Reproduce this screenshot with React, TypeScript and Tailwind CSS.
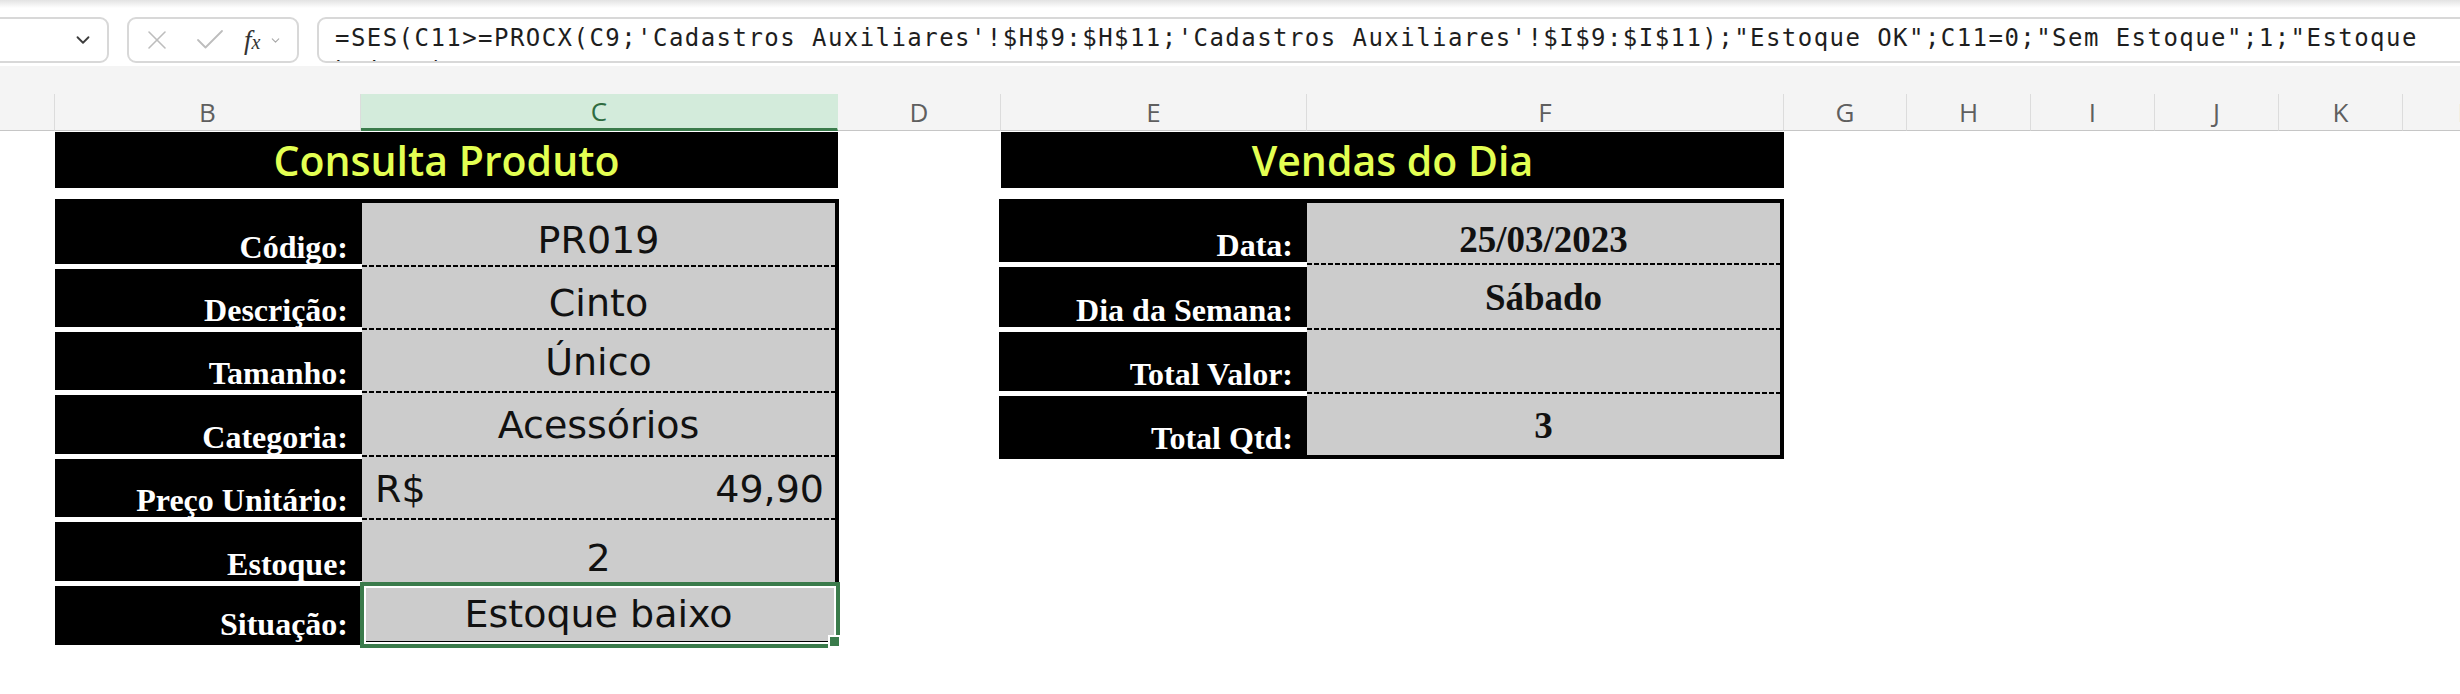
import { X, Check, ChevronDown } from 'lucide-react'

const columns = [
  { name: 'A', w: 'w-[55px]', first: true },
  { name: 'B', w: 'w-[306px]' },
  { name: 'C', w: 'w-[477px]', selected: true },
  { name: 'D', w: 'w-[163px]' },
  { name: 'E', w: 'w-[306px]' },
  { name: 'F', w: 'w-[477px]' },
  { name: 'G', w: 'w-[123px]' },
  { name: 'H', w: 'w-[124px]' },
  { name: 'I', w: 'w-[124px]' },
  { name: 'J', w: 'w-[124px]' },
  { name: 'K', w: 'w-[124px]' },
  { name: 'L', w: 'w-[124px]' },
]

const produto = [
  { label: 'Código:', value: 'PR019', h: 'h-[66px]', pad: 'pt-[12px]' },
  { label: 'Descrição:', value: 'Cinto', h: 'h-[63px]', pad: 'pt-[9px]' },
  { label: 'Tamanho:', value: 'Único', h: 'h-[63px]', pad: 'pt-0' },
  { label: 'Categoria:', value: 'Acessórios', h: 'h-[64px]', pad: 'pt-0' },
  { label: 'Preço Unitário:', value: 'money', h: 'h-[63px]', pad: 'pt-0' },
  { label: 'Estoque:', value: '2', h: 'h-[64px]', pad: 'pt-[12px]' },
  { label: 'Situação:', value: 'Estoque baixo', h: 'h-[55px]', pad: 'pt-0' },
]

const vendas = [
  { label: 'Data:', value: '25/03/2023', h: 'h-[64px]', pad: 'pt-[12px]' },
  { label: 'Dia da Semana:', value: 'Sábado', h: 'h-[65px]', pad: 'pt-0' },
  { label: 'Total Valor:', value: '', h: 'h-[64px]', pad: 'pt-0' },
  { label: 'Total Qtd:', value: '3', h: 'h-[59px]', pad: 'pt-0' },
]

const formula =
  '=SES(C11>=PROCX(C9;\'Cadastros Auxiliares\'!$H$9:$H$11;\'Cadastros Auxiliares\'!$I$9:$I$11);"Estoque OK";C11=0;"Sem Estoque";1;"Estoque'

function Dashed() {
  return (
    <>
      <div className="h-[2px] bg-[repeating-linear-gradient(90deg,#000_0px,#000_5px,transparent_5px,transparent_7px)]" />
      <div className="h-[2px]" />
    </>
  )
}

function Label({ text, last, width }: { text: string; last: boolean; width: string }) {
  return (
    <div
      className={`${width} bg-black flex items-end justify-end pr-[14px] pb-[1px] ${
        last ? '' : 'border-b-[5px] border-white'
      }`}
    >
      <span className="font-['Liberation_Serif',serif] font-bold text-[32px] leading-none text-white whitespace-nowrap">
        {text}
      </span>
    </div>
  )
}

function ConsultaProduto() {
  return (
    <div className="w-[783px]">
      <div className="h-[56px] bg-black flex items-center justify-center">
        <span className="font-['Open_Sans',sans-serif] font-semibold text-[41px] leading-none text-[#e3ff52]">
          Consulta Produto
        </span>
      </div>
      <div className="mt-[11px] w-[784px] border-t-4 border-r-4 border-b-4 border-black">
        {produto.map((row, i) => {
          const last = i === produto.length - 1
          return (
            <div key={row.label} className={`flex ${row.h}`}>
              <Label text={row.label} last={last} width="w-[307px]" />
              <div className="relative flex-1 bg-[#cccccc] flex flex-col">
                <div
                  className={`flex-1 flex items-center ${row.pad} font-['DejaVu_Sans',sans-serif] text-[38px] leading-none text-[#111] ${
                    row.value === 'money' ? 'justify-between pl-[13px] pr-[11px]' : 'justify-center'
                  }`}
                >
                  {row.value === 'money' ? (
                    <>
                      <span>R$</span>
                      <span>49,90</span>
                    </>
                  ) : (
                    <span>{row.value}</span>
                  )}
                </div>
                {!last && <Dashed />}
                {last && (
                  <div className="absolute -left-[2px] -top-[4px] -right-[5px] -bottom-[7px] border-4 border-[#3a7b4b] shadow-[inset_0_0_0_2px_#fff]">
                    <div className="absolute -right-[5px] -bottom-[4px] w-[13px] h-[13px] bg-[#3a7b4b] border-2 border-white" />
                  </div>
                )}
              </div>
            </div>
          )
        })}
      </div>
    </div>
  )
}

function VendasDoDia() {
  return (
    <div className="w-[783px]">
      <div className="h-[56px] bg-black flex items-center justify-center">
        <span className="font-['Open_Sans',sans-serif] font-semibold text-[41px] leading-none text-[#e3ff52]">
          Vendas do Dia
        </span>
      </div>
      <div className="mt-[11px] -ml-[2px] w-[785px] border-t-4 border-r-4 border-b-4 border-black">
        {vendas.map((row, i) => {
          const last = i === vendas.length - 1
          return (
            <div key={row.label} className={`flex ${row.h}`}>
              <Label text={row.label} last={last} width="w-[308px]" />
              <div className="flex-1 bg-[#cccccc] flex flex-col">
                <div
                  className={`flex-1 flex items-center justify-center ${row.pad} font-['Liberation_Serif',serif] font-bold text-[37px] leading-none text-[#111]`}
                >
                  {row.value}
                </div>
                {!last && <Dashed />}
              </div>
            </div>
          )
        })}
      </div>
    </div>
  )
}

export default function App() {
  return (
    <div className="w-[2460px] h-[694px] bg-white overflow-hidden">
      {/* formula bar */}
      <div className="h-[66px] bg-white">
        <div className="h-[8px] bg-linear-to-b from-[#e3e3e3] to-white" />
        <div className="flex gap-[18px] pt-[9px]">
          <div className="-ml-[40px] w-[149px] h-[46px] shrink-0 rounded-[9px] border-2 border-[#d8d8d8] bg-white flex items-center justify-end pr-[13px]">
            <ChevronDown className="w-[22px] h-[22px] text-[#3c3c3c]" strokeWidth={2} />
          </div>
          <div className="w-[172px] h-[46px] shrink-0 rounded-[9px] border-2 border-[#d8d8d8] bg-white flex items-center pl-[12px]">
            <X className="w-[32px] h-[32px] text-[#bdbdbd]" strokeWidth={1.2} />
            <Check className="ml-[19px] w-[36px] h-[36px] text-[#bdbdbd]" strokeWidth={1.2} />
            <span className="ml-[16px] font-['Liberation_Serif',serif] italic text-[27px] leading-none text-[#333]">
              f<span className="text-[20px]">x</span>
            </span>
            <ChevronDown className="ml-[9px] w-[13px] h-[13px] text-[#a8a8a8]" strokeWidth={2} />
          </div>
          <div className="flex-1 -mr-[40px] h-[46px] rounded-l-[9px] border-2 border-[#d8d8d8] bg-white overflow-hidden pl-[16px] pt-[3px]">
            <div className="font-['DejaVu_Sans_Mono',monospace] text-[24px] tracking-[1.45px] leading-[33px] text-[#1e1e1e] whitespace-pre">
              {formula}
              {'\n'}
              {'baixo")'}
            </div>
          </div>
        </div>
      </div>

      {/* column headers */}
      <div className="h-[65px] bg-[#f4f4f4] flex flex-col justify-end">
        <div className="flex h-[37px]">
          {columns.map(c => (
            <div
              key={c.name}
              className={`${c.w} shrink-0 h-full flex items-center ${
                c.first ? 'justify-start' : 'justify-center'
              } font-['Open_Sans',sans-serif] text-[26px] leading-none ${
                c.selected
                  ? 'bg-[#d3ebdb] border-b-[3px] border-b-[#3a7b4b] text-[#2f6b40] border-r border-r-[#d3ebdb]'
                  : 'border-b border-b-[#c6c6c6] text-[#5f5f5f] border-r border-r-[#dcdcdc]'
              }`}
            >
              <span className={c.first ? '-ml-[17px]' : ''}>{c.name}</span>
            </div>
          ))}
        </div>
      </div>

      {/* sheet */}
      <div className="flex pl-[55px] pt-px gap-[163px]">
        <ConsultaProduto />
        <VendasDoDia />
      </div>
    </div>
  )
}
